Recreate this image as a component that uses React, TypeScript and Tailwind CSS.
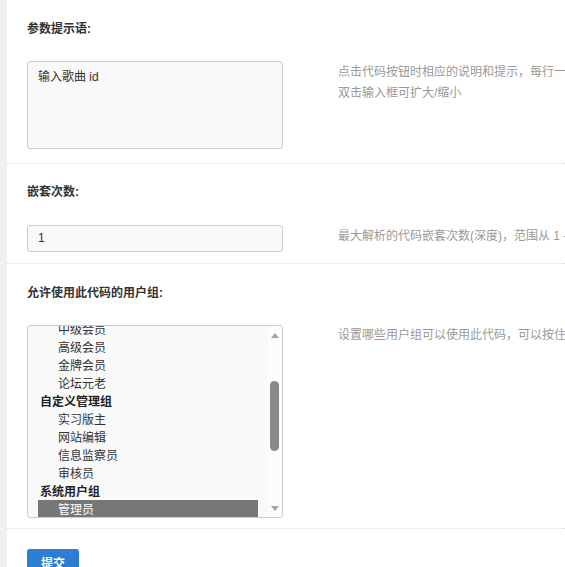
import React from "react";

const font = { fontFamily: '"Liberation Sans", "Noto Sans CJK SC", sans-serif' };

type Row = { text: string; group?: boolean; selected?: boolean };

const rows: Row[] = [
  { text: "中级会员" },
  { text: "高级会员" },
  { text: "金牌会员" },
  { text: "论坛元老" },
  { text: "自定义管理组", group: true },
  { text: "实习版主" },
  { text: "网站编辑" },
  { text: "信息监察员" },
  { text: "审核员" },
  { text: "系统用户组", group: true },
  { text: "管理员", selected: true },
];

export default function App() {
  return (
    <div className="flex min-h-[567px] w-[565px] overflow-hidden bg-white text-[12px] text-[#333]" style={font}>
      <div className="w-[7px] shrink-0 bg-[#f0f0f0]" />
      <div className="flex-1 min-w-0">
        {/* Section 1 */}
        <div className="pl-5 pt-[21px] pb-[14px] border-b border-dotted border-[#dcdcdc]">
          <div className="h-4 leading-4 font-bold whitespace-nowrap">参数提示语:</div>
          <div className="mt-[24px] flex items-start">
            <div className="w-[256px] h-[88px] shrink-0 rounded-[3px] border border-[#ccc] bg-[#f9f9f9] pl-[10px] pt-[6px] leading-[18px] text-[12px] text-[#333]">
              输入歌曲 id
            </div>
            <div className="ml-[55px] pt-[1px] leading-[21px] text-[#999] whitespace-nowrap">
              <div>点击代码按钮时相应的说明和提示，每行一个参数的提示语</div>
              <div>双击输入框可扩大/缩小</div>
            </div>
          </div>
        </div>

        {/* Section 2 */}
        <div className="pl-5 pt-[20px] pb-[11px] border-b border-dotted border-[#dcdcdc]">
          <div className="h-4 leading-4 font-bold whitespace-nowrap">嵌套次数:</div>
          <div className="mt-[25px] flex items-start">
            <div className="w-[256px] h-[27px] shrink-0 rounded-[3px] border border-[#ccc] bg-[#f9f9f9] pl-[10px] leading-[25px] text-[12px] text-[#333]">
              1
            </div>
            <div className="ml-[55px] pt-[1px] leading-[21px] text-[#999] whitespace-nowrap">
              最大解析的代码嵌套次数(深度)，范围从 1 - 10
            </div>
          </div>
        </div>

        {/* Section 3 */}
        <div className="pl-5 pt-[21px] pb-[10px] border-b border-dotted border-[#dcdcdc]">
          <div className="h-4 leading-4 font-bold whitespace-nowrap">允许使用此代码的用户组:</div>
          <div className="mt-[24px] flex items-start">
            <div className="w-[256px] h-[193px] shrink-0 rounded-[3px] border border-[#ccc] bg-[#f9f9f9] flex overflow-hidden">
              <div className="flex-1 min-w-0 pl-[10px] pr-[9px] overflow-hidden">
                <div className="mt-[-6px]">
                  {rows.map((r, i) => (
                    <div
                      key={i}
                      className={
                        "h-[18px] leading-[20px] whitespace-nowrap " +
                        (r.group ? "pl-[2px] font-bold text-[#222] " : "pl-[20px] ") +
                        (r.selected ? "bg-[#777] text-white" : "")
                      }
                    >
                      {r.text}
                    </div>
                  ))}
                </div>
              </div>
              <div className="w-[15px] shrink-0 bg-[#fcfcfc] flex flex-col items-center">
                <div className="mt-[7px] w-0 h-0 border-l-[4.5px] border-r-[4.5px] border-b-[5px] border-l-transparent border-r-transparent border-b-[#a3a3a3]" />
                <div className="mt-[43px] w-[9px] h-[70px] rounded-full bg-[#8a8a8a]" />
                <div className="mt-[55px] w-0 h-0 border-l-[4.5px] border-r-[4.5px] border-t-[5px] border-l-transparent border-r-transparent border-t-[#a3a3a3]" />
              </div>
            </div>
            <div className="ml-[55px] pt-[0px] leading-[21px] text-[#999] whitespace-nowrap">
              设置哪些用户组可以使用此代码，可以按住 CTRL 多选
            </div>
          </div>
        </div>

        {/* Submit */}
        <div className="pl-5 pt-[20px]">
          <button className="w-[52px] h-[30px] rounded-[3px] bg-[#2d7dd2] text-white text-[12px] font-bold leading-[30px]" style={font}>
            提交
          </button>
        </div>
      </div>
    </div>
  );
}
